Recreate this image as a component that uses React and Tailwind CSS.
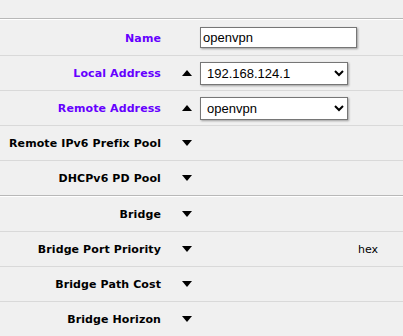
import React from "react";

const labelFont = { fontFamily: '"DejaVu Sans", Verdana, sans-serif' };

function TriUp() {
    return (
        <svg width="10" height="6" viewBox="0 0 10 6" className="block">
            <path d="M5 0 L10 6 L0 6 Z" fill="#000" />
        </svg>
    );
}

function TriDown() {
    return (
        <svg width="10" height="6" viewBox="0 0 10 6" className="block">
            <path d="M0 0 L10 0 L5 6 Z" fill="#000" />
        </svg>
    );
}

function Row({ label, required, arrow, children, extra, h, last }) {
    return (
        <div
            className={`flex items-center ${h} ${last ? "" : "border-b border-[#d9d9d9]"}`}
        >
            <div
                className={`w-[170px] shrink-0 pr-[9px] pt-[3px] text-right text-[11px] font-bold tracking-[0.1px] ${required ? "text-[#6600ff]" : "text-black"}`}
                style={labelFont}
            >
                {label}
            </div>
            <div className="w-[30px] shrink-0 pl-[12px]">
                {arrow === "up" && <TriUp />}
                {arrow === "down" && <TriDown />}
            </div>
            <div className="w-[158px] shrink-0">{children}</div>
            {extra && (
                <div className="pt-[3px] text-[11px] text-black" style={labelFont}>
                    {extra}
                </div>
            )}
        </div>
    );
}

function Groove() {
    return <div className="h-0 border-t border-b border-t-[#b8b8b8] border-b-white" />;
}

export default function App() {
    const inputFont = { fontFamily: '"Liberation Sans", Arial, sans-serif' };

    return (
        <div className="w-[403px] h-[336px] overflow-hidden bg-[#f0f0f0]">
            <div className="h-[18px]" />
            <Groove />

            {/* grupo principal */}
            <Row label="Name" required h="h-[36px]">
                <input
                    defaultValue="openvpn"
                    className="block w-[157px] h-[21px] bg-white border border-[#767676] px-[2px] text-[13px] text-black shadow-[1px_1px_2px_rgba(0,0,0,0.35)] outline-none"
                    style={inputFont}
                />
            </Row>
            <Row label="Local Address" required arrow="up" h="h-[35px]">
                <select
                    defaultValue="192.168.124.1"
                    className="block w-[148px] h-[23px] bg-white border border-[#767676] pl-[2px] text-[13px] text-black shadow-[1px_1px_2px_rgba(0,0,0,0.35)] outline-none"
                    style={inputFont}
                >
                    <option>192.168.124.1</option>
                </select>
            </Row>
            <Row label="Remote Address" required arrow="up" h="h-[35px]">
                <select
                    defaultValue="openvpn"
                    className="block w-[148px] h-[23px] bg-white border border-[#767676] pl-[2px] text-[13px] text-black shadow-[1px_1px_2px_rgba(0,0,0,0.35)] outline-none"
                    style={inputFont}
                >
                    <option>openvpn</option>
                </select>
            </Row>
            <Row label="Remote IPv6 Prefix Pool" arrow="down" h="h-[35px]" />
            <Row label="DHCPv6 PD Pool" arrow="down" h="h-[34px]" last />

            <Groove />

            {/* bridge */}
            <Row label="Bridge" arrow="down" h="h-[35px]" />
            <Row label="Bridge Port Priority" arrow="down" extra="hex" h="h-[35px]" />
            <Row label="Bridge Path Cost" arrow="down" h="h-[35px]" />
            <Row label="Bridge Horizon" arrow="down" h="h-[34px]" last />
        </div>
    );
}
